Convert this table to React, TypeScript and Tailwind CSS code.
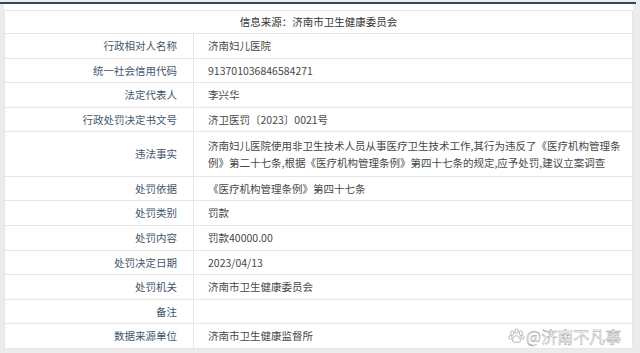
import React from "react";

const rows: { label: string; value: React.ReactNode; tall?: boolean }[] = [
  { label: "行政相对人名称", value: "济南妇儿医院" },
  { label: "统一社会信用代码", value: "913701036846584271" },
  { label: "法定代表人", value: "李兴华" },
  { label: "行政处罚决定书文号", value: "济卫医罚〔2023〕0021号" },
  {
    label: "违法事实",
    tall: true,
    value: (
      <>
        <span className="block whitespace-nowrap">济南妇儿医院使用非卫生技术人员从事医疗卫生技术工作,其行为违反了《医疗机构管理条</span>
        <span className="block whitespace-nowrap">例》第二十七条,根据《医疗机构管理条例》第四十七条的规定,应予处罚,建议立案调查</span>
      </>
    ),
  },
  { label: "处罚依据", value: "《医疗机构管理条例》第四十七条" },
  { label: "处罚类别", value: "罚款" },
  { label: "处罚内容", value: "罚款40000.00" },
  { label: "处罚决定日期", value: "2023/04/13" },
  { label: "处罚机关", value: "济南市卫生健康委员会" },
  { label: "备注", value: "" },
  { label: "数据来源单位", value: "济南市卫生健康监督所" },
];

function Paw() {
  return (
    <svg width="17" height="17" viewBox="0 0 20 20" fill="white" stroke="#a8a8a8" strokeWidth="1">
      <ellipse cx="5" cy="6" rx="2" ry="2.6" />
      <ellipse cx="10" cy="3.6" rx="2" ry="2.6" />
      <ellipse cx="15" cy="6" rx="2" ry="2.6" />
      <ellipse cx="3" cy="11" rx="1.8" ry="2.2" />
      <ellipse cx="17" cy="11" rx="1.8" ry="2.2" />
      <path d="M10 9 C6.5 9 5 13.5 5.5 15.5 C6 17.5 8 17 10 16.5 C12 17 14 17.5 14.5 15.5 C15 13.5 13.5 9 10 9 Z" />
    </svg>
  );
}

export default function App() {
  return (
    <div
      className="relative w-[640px] h-[353px] overflow-hidden bg-[#ececec]"
      style={{ fontFamily: '"Noto Sans CJK SC", "Noto Sans", sans-serif' }}
    >
      <div className="h-[2px]" />
      <div className="h-[2px] w-[636px] bg-[#2e4b5c]" />
      <div className="ml-[4px] w-[629px] bg-white pt-[6px]">
        <div className="border-t border-l border-r border-[#e6e6e6] text-[10.5px]">
          <div className="h-[23px] border-b border-[#e6e6e6] flex items-center justify-center text-[#333]">
            信息来源：济南市卫生健康委员会
          </div>
          {rows.map((r) => (
            <div
              key={r.label}
              className={`flex border-b border-[#e6e6e6] ${r.tall ? "h-[44.5px]" : "h-[24.6px]"}`}
            >
              <div className="w-[189px] shrink-0 border-r border-[#e6e6e6] flex items-center justify-end pr-[16px] text-[#3f566b]">
                {r.label}
              </div>
              <div
                className={`flex-1 flex flex-col justify-center pl-[14px] text-[#474747] ${r.tall ? "leading-[17px]" : ""}`}
              >
                {r.value}
              </div>
            </div>
          ))}
        </div>
      </div>
      <div className="absolute left-[508px] top-[326px] flex items-center gap-[1px]">
        <Paw />
        <span className="text-[16px] leading-[20px] text-white [-webkit-text-stroke:0.45px_#a0a0a0]">@济南不凡事</span>
      </div>
    </div>
  );
}
